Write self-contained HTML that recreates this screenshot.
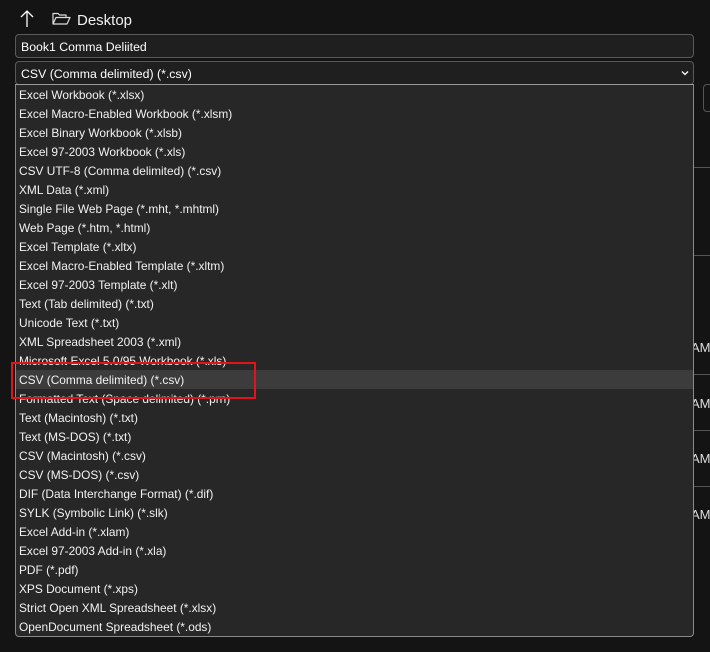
<!DOCTYPE html>
<html><head><meta charset="utf-8"><style>
*{margin:0;padding:0;box-sizing:border-box}
body{width:710px;height:652px;background:#141414;font-family:"Liberation Sans",sans-serif;color:#fff;position:relative;overflow:hidden}
.abs{position:absolute}
.field{position:absolute;left:15px;width:679px;border:1px solid #5a5a5a;border-radius:4px;background:#1f1f1f;font-size:12.3px;padding-left:5px}
.list{position:absolute;left:15px;top:84px;width:679px;height:553px;background:#272727;border:1px solid #8a8a8a;border-top-color:#9a9a9a;border-radius:0 0 4px 4px}
.row{height:19px;line-height:21px;font-size:11.9px;padding-left:3px;color:#f2f2f2;white-space:nowrap}
.sel{background:#3c3c3c}
.hl{position:absolute;left:11px;top:362px;width:245px;height:37px;border:2px solid #e0141a}
.sep{position:absolute;left:694px;width:16px;height:1px;background:#555}
.am{position:absolute;left:691px;font-size:13px;color:#ddd}
</style></head><body>
<svg class="abs" style="left:20px;top:10px" width="14" height="18" viewBox="0 0 14 18"><path d="M7 1V17M1 7L7 1L13 7" stroke="#fff" stroke-width="1.3" fill="none"/></svg>
<svg class="abs" style="left:52px;top:12px" width="19" height="14" viewBox="0 0 19 14"><path d="M1 12V1.5H6L7.5 3H14V5.5M1 12L4 5.5H18L15 12Z" stroke="#ddd" stroke-width="1.2" fill="none" stroke-linejoin="round"/></svg>
<div class="abs" style="left:77px;top:12px;font-size:15px;color:#f0f0f0">Desktop</div>
<div class="field" style="top:34px;height:24px;line-height:24px">Book1 Comma Deliited</div>
<div class="field" style="top:61px;height:24px;line-height:24px">CSV (Comma delimited) (*.csv)
<svg class="abs" style="right:4px;top:8px" width="8" height="6" viewBox="0 0 8 6"><path d="M1 1.5L4 4.5L7 1.5" stroke="#fff" stroke-width="1.3" fill="none"/></svg></div>
<div class="abs" style="left:703px;top:84px;width:12px;height:28px;border:1px solid #555;border-radius:4px"></div>
<div class="sep" style="top:167px"></div><div class="sep" style="top:255px"></div><div class="sep" style="top:374px"></div><div class="sep" style="top:430px"></div><div class="sep" style="top:486px"></div>
<div class="am" style="top:340px">AM</div><div class="am" style="top:396px">AM</div><div class="am" style="top:451px">AM</div><div class="am" style="top:507px">AM</div>
<div class="list">
<div class="row">Excel Workbook (*.xlsx)</div>
<div class="row">Excel Macro-Enabled Workbook (*.xlsm)</div>
<div class="row">Excel Binary Workbook (*.xlsb)</div>
<div class="row">Excel 97-2003 Workbook (*.xls)</div>
<div class="row">CSV UTF-8 (Comma delimited) (*.csv)</div>
<div class="row">XML Data (*.xml)</div>
<div class="row">Single File Web Page (*.mht, *.mhtml)</div>
<div class="row">Web Page (*.htm, *.html)</div>
<div class="row">Excel Template (*.xltx)</div>
<div class="row">Excel Macro-Enabled Template (*.xltm)</div>
<div class="row">Excel 97-2003 Template (*.xlt)</div>
<div class="row">Text (Tab delimited) (*.txt)</div>
<div class="row">Unicode Text (*.txt)</div>
<div class="row">XML Spreadsheet 2003 (*.xml)</div>
<div class="row">Microsoft Excel 5.0/95 Workbook (*.xls)</div>
<div class="row sel">CSV (Comma delimited) (*.csv)</div>
<div class="row">Formatted Text (Space delimited) (*.prn)</div>
<div class="row">Text (Macintosh) (*.txt)</div>
<div class="row">Text (MS-DOS) (*.txt)</div>
<div class="row">CSV (Macintosh) (*.csv)</div>
<div class="row">CSV (MS-DOS) (*.csv)</div>
<div class="row">DIF (Data Interchange Format) (*.dif)</div>
<div class="row">SYLK (Symbolic Link) (*.slk)</div>
<div class="row">Excel Add-in (*.xlam)</div>
<div class="row">Excel 97-2003 Add-in (*.xla)</div>
<div class="row">PDF (*.pdf)</div>
<div class="row">XPS Document (*.xps)</div>
<div class="row">Strict Open XML Spreadsheet (*.xlsx)</div>
<div class="row">OpenDocument Spreadsheet (*.ods)</div>
</div>
<div class="hl"></div>
</body></html>
